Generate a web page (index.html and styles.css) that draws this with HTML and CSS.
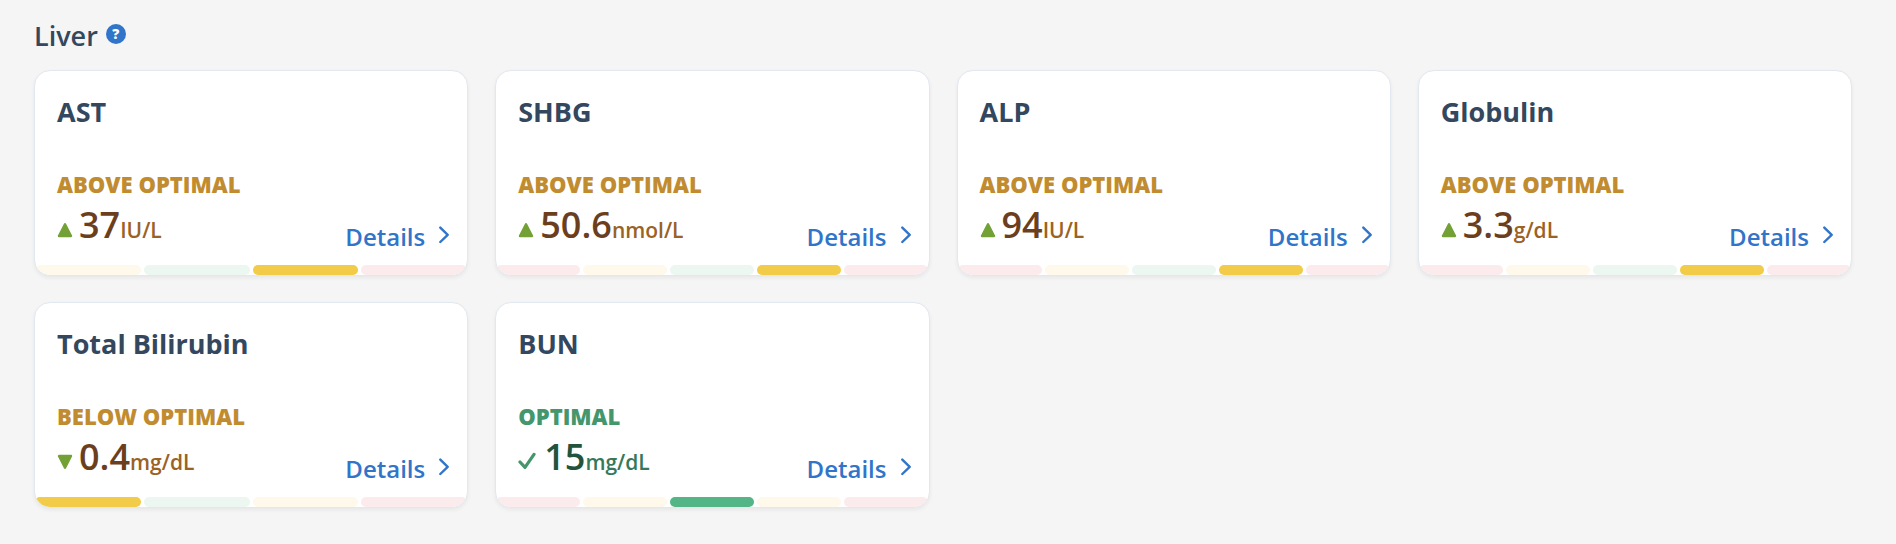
FILE: index.html
```
<!DOCTYPE html>
<html lang="en">
<head>
    <meta charset="UTF-8">
    <meta name="viewport" content="width=device-width, initial-scale=1.0">
    <title>Liver</title>
    <link rel="stylesheet" href="styles.css">
</head>
<body>
    <!-- shared icons -->
    <svg class="icon-defs" aria-hidden="true">
        <symbol id="icon-up" viewBox="0 0 16 16">
            <path d="M8 2.2 L14 14 H2 Z" fill="currentColor" stroke="currentColor" stroke-width="2.4" stroke-linejoin="round"/>
        </symbol>
        <symbol id="icon-down" viewBox="0 0 16 16">
            <path d="M8 13.8 L2 2 H14 Z" fill="currentColor" stroke="currentColor" stroke-width="2.4" stroke-linejoin="round"/>
        </symbol>
        <symbol id="icon-check" viewBox="0 0 18 18">
            <path d="M2 10 L7 15.4 L16 2.4" fill="none" stroke="currentColor" stroke-width="3.2" stroke-linecap="round" stroke-linejoin="round"/>
        </symbol>
        <symbol id="icon-chevron" viewBox="0 0 10 18">
            <path d="M1.3 1.6 L8.7 8.8 L1.3 16" fill="none" stroke="currentColor" stroke-width="2.4" stroke-linecap="round" stroke-linejoin="round"/>
        </symbol>
    </svg>

    <main class="panel">
        <div class="panel-header">
            <h2 class="panel-title">Liver</h2>
            <button type="button" class="help-btn" aria-label="About liver markers">?</button>
        </div>

        <div class="card-grid">
            <article class="card high">
                <div class="card-body">
                    <h3 class="card-title">AST</h3>
                    <p class="status">ABOVE OPTIMAL</p>
                    <div class="card-row">
                        <div class="reading">
                            <svg class="trend"><use href="#icon-up"/></svg>
                            <span class="value">37</span><span class="unit">IU/L</span>
                        </div>
                        <a href="#ast" class="details">Details <svg class="chevron"><use href="#icon-chevron"/></svg></a>
                    </div>
                </div>
                <div class="range">
                    <span class="yellow"></span><span class="green"></span><span class="yellow active"></span><span class="red"></span>
                </div>
            </article>

            <article class="card high">
                <div class="card-body">
                    <h3 class="card-title">SHBG</h3>
                    <p class="status">ABOVE OPTIMAL</p>
                    <div class="card-row">
                        <div class="reading">
                            <svg class="trend"><use href="#icon-up"/></svg>
                            <span class="value">50.6</span><span class="unit">nmol/L</span>
                        </div>
                        <a href="#shbg" class="details">Details <svg class="chevron"><use href="#icon-chevron"/></svg></a>
                    </div>
                </div>
                <div class="range">
                    <span class="red"></span><span class="yellow"></span><span class="green"></span><span class="yellow active"></span><span class="red"></span>
                </div>
            </article>

            <article class="card high">
                <div class="card-body">
                    <h3 class="card-title">ALP</h3>
                    <p class="status">ABOVE OPTIMAL</p>
                    <div class="card-row">
                        <div class="reading">
                            <svg class="trend"><use href="#icon-up"/></svg>
                            <span class="value">94</span><span class="unit">IU/L</span>
                        </div>
                        <a href="#alp" class="details">Details <svg class="chevron"><use href="#icon-chevron"/></svg></a>
                    </div>
                </div>
                <div class="range">
                    <span class="red"></span><span class="yellow"></span><span class="green"></span><span class="yellow active"></span><span class="red"></span>
                </div>
            </article>

            <article class="card high">
                <div class="card-body">
                    <h3 class="card-title">Globulin</h3>
                    <p class="status">ABOVE OPTIMAL</p>
                    <div class="card-row">
                        <div class="reading">
                            <svg class="trend"><use href="#icon-up"/></svg>
                            <span class="value">3.3</span><span class="unit">g/dL</span>
                        </div>
                        <a href="#globulin" class="details">Details <svg class="chevron"><use href="#icon-chevron"/></svg></a>
                    </div>
                </div>
                <div class="range">
                    <span class="red"></span><span class="yellow"></span><span class="green"></span><span class="yellow active"></span><span class="red"></span>
                </div>
            </article>

            <article class="card low">
                <div class="card-body">
                    <h3 class="card-title">Total Bilirubin</h3>
                    <p class="status">BELOW OPTIMAL</p>
                    <div class="card-row">
                        <div class="reading">
                            <svg class="trend"><use href="#icon-down"/></svg>
                            <span class="value">0.4</span><span class="unit">mg/dL</span>
                        </div>
                        <a href="#total-bilirubin" class="details">Details <svg class="chevron"><use href="#icon-chevron"/></svg></a>
                    </div>
                </div>
                <div class="range">
                    <span class="yellow active"></span><span class="green"></span><span class="yellow"></span><span class="red"></span>
                </div>
            </article>

            <article class="card optimal">
                <div class="card-body">
                    <h3 class="card-title">BUN</h3>
                    <p class="status">OPTIMAL</p>
                    <div class="card-row">
                        <div class="reading">
                            <svg class="trend check"><use href="#icon-check"/></svg>
                            <span class="value">15</span><span class="unit">mg/dL</span>
                        </div>
                        <a href="#bun" class="details">Details <svg class="chevron"><use href="#icon-chevron"/></svg></a>
                    </div>
                </div>
                <div class="range">
                    <span class="red"></span><span class="yellow"></span><span class="green active"></span><span class="yellow"></span><span class="red"></span>
                </div>
            </article>
        </div>
    </main>
</body>
</html>
```
FILE: styles.css
```
:root {
    --page-bg: #f5f5f5;
    --navy: #33475f;
    --link-blue: #3075c9;
    --border: #e2e8f0;
    --status: #c18c30;
    --value: #6b3f1d;
    --unit: #9a6224;
    --trend: #73a135;
}

* {
    margin: 0;
    padding: 0;
    box-sizing: border-box;
}

body {
    background-color: var(--page-bg);
    color: var(--navy);
    font-family: 'Open Sans', 'Noto Sans', sans-serif;
}

.icon-defs {
    display: none;
}

.panel {
    padding: 16px 44px 36px 34px;
}

.panel-header {
    display: flex;
    align-items: center;
    gap: 8px;
    height: 40px;
    margin-bottom: 14px;
}

.panel-title {
    font-size: 27px;
    font-weight: 600;
    line-height: 38px;
}

.help-btn {
    width: 20px;
    height: 20px;
    margin-bottom: 4px;
    border: none;
    border-radius: 50%;
    background-color: var(--link-blue);
    color: white;
    font-family: inherit;
    font-size: 14px;
    font-weight: 800;
    line-height: 20px;
    cursor: pointer;
}

.card-grid {
    display: grid;
    grid-template-columns: repeat(4, 1fr);
    gap: 26px 27px;
}

.card {
    overflow: hidden;
    border: 1px solid var(--border);
    border-radius: 16px;
    background-color: white;
    box-shadow: 0 2px 4px rgba(0, 0, 0, 0.06);
}

.card-body {
    padding: 22px 18px 12px 22px;
}

.card-title {
    font-size: 27px;
    font-weight: 700;
    line-height: 38px;
}

.status {
    margin-top: 37px;
    color: var(--status);
    font-size: 22px;
    font-weight: 800;
    line-height: 32px;
}

.card-row {
    display: flex;
    align-items: flex-end;
    justify-content: space-between;
    margin-top: 5px;
}

.reading {
    display: flex;
    align-items: baseline;
    margin-bottom: 8px;
}

.trend {
    width: 16px;
    height: 16px;
    margin-right: 6px;
    color: var(--trend);
}

.trend.check {
    width: 18px;
    height: 18px;
    margin-right: 8px;
}

.value {
    color: var(--value);
    font-size: 36px;
    font-weight: 600;
    line-height: 40px;
}

.unit {
    color: var(--unit);
    font-size: 21px;
    font-weight: 600;
    line-height: 28px;
}

.details {
    display: flex;
    align-items: center;
    gap: 14px;
    color: var(--link-blue);
    font-size: 24px;
    font-weight: 600;
    line-height: 32px;
    text-decoration: none;
}

.details:hover {
    text-decoration: underline;
}

.chevron {
    width: 10px;
    height: 18px;
    margin-bottom: 4px;
}

.range {
    display: flex;
    gap: 3px;
}

.range span {
    flex: 1;
    height: 10px;
    border-radius: 5px;
}

.range .red {
    background-color: #fcebed;
}

.range .yellow {
    background-color: #fef9eb;
}

.range .green {
    background-color: #ecf7f1;
}

.range .yellow.active {
    background-color: #f2cb48;
}

.range .green.active {
    background-color: #54b587;
}

.optimal {
    --status: #44966c;
    --value: #22543d;
    --unit: #35795a;
    --trend: #44966c;
}
```
